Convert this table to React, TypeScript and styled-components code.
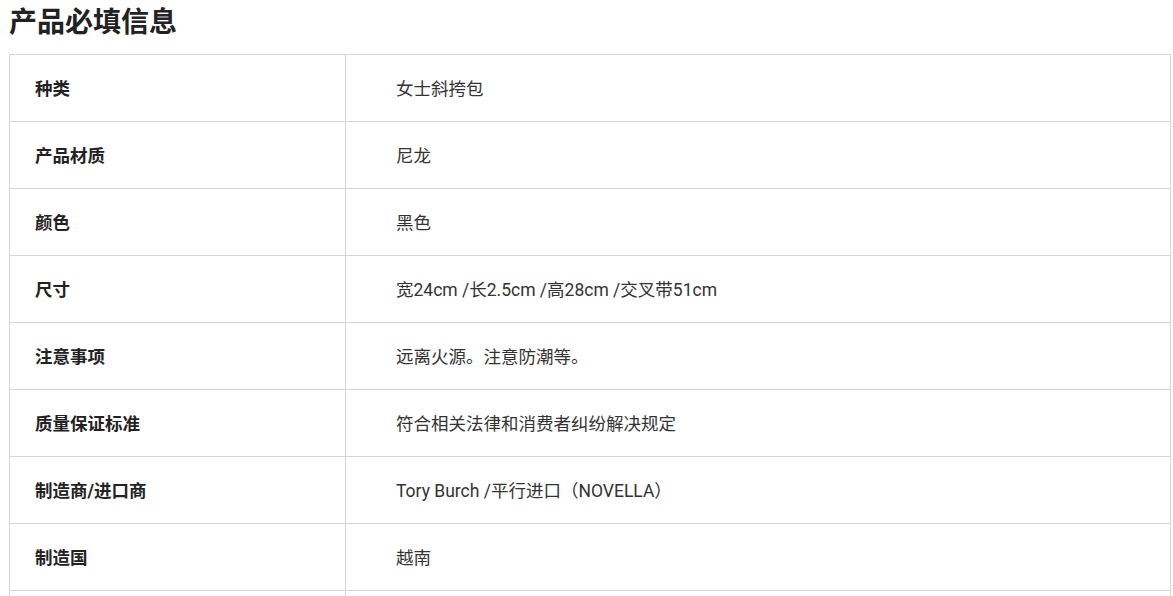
import styled, { createGlobalStyle } from 'styled-components';

const GlobalStyle = createGlobalStyle`
  body {
    margin: 0;
    background: #fff;
    font-family: Roboto, "Noto Sans CJK SC", sans-serif;
  }
`;

const Wrapper = styled.div`
  box-sizing: border-box;
  padding: 0 2px 0 9px;
  width: 1173px;
`;

const Heading = styled.h2`
  margin: 0;
  height: 54px;
  padding-top: 4px;
  box-sizing: border-box;
  font-size: 28px;
  line-height: 38px;
  font-weight: 700;
  color: #222;
`;

const Table = styled.table`
  width: 1162px;
  border-collapse: collapse;
  table-layout: fixed;
`;

const Row = styled.tr`
  height: 67px;
`;

const Label = styled.th`
  width: 336px;
  box-sizing: border-box;
  border: 1px solid #d6d6d6;
  padding: 0 0 2px 25px;
  text-align: left;
  font-size: 17.5px;
  font-weight: 700;
  color: #222;
`;

const Value = styled.td`
  border: 1px solid #d6d6d6;
  padding: 0 0 2px 50px;
  font-size: 17.5px;
  color: #333;
`;

const data: [string, string][] = [
  ['种类', '女士斜挎包'],
  ['产品材质', '尼龙'],
  ['颜色', '黑色'],
  ['尺寸', '宽24cm /长2.5cm /高28cm /交叉带51cm'],
  ['注意事项', '远离火源。注意防潮等。'],
  ['质量保证标准', '符合相关法律和消费者纠纷解决规定'],
  ['制造商/进口商', 'Tory Burch /平行进口（NOVELLA）'],
  ['制造国', '越南'],
];

export default function App() {
  return (
    <Wrapper>
      <GlobalStyle />
      <Heading>产品必填信息</Heading>
      <Table>
        <tbody>
          {data.map(([label, value]) => (
            <Row key={label}>
              <Label>{label}</Label>
              <Value>{value}</Value>
            </Row>
          ))}
          <Row>
            <Label />
            <Value />
          </Row>
        </tbody>
      </Table>
    </Wrapper>
  );
}
